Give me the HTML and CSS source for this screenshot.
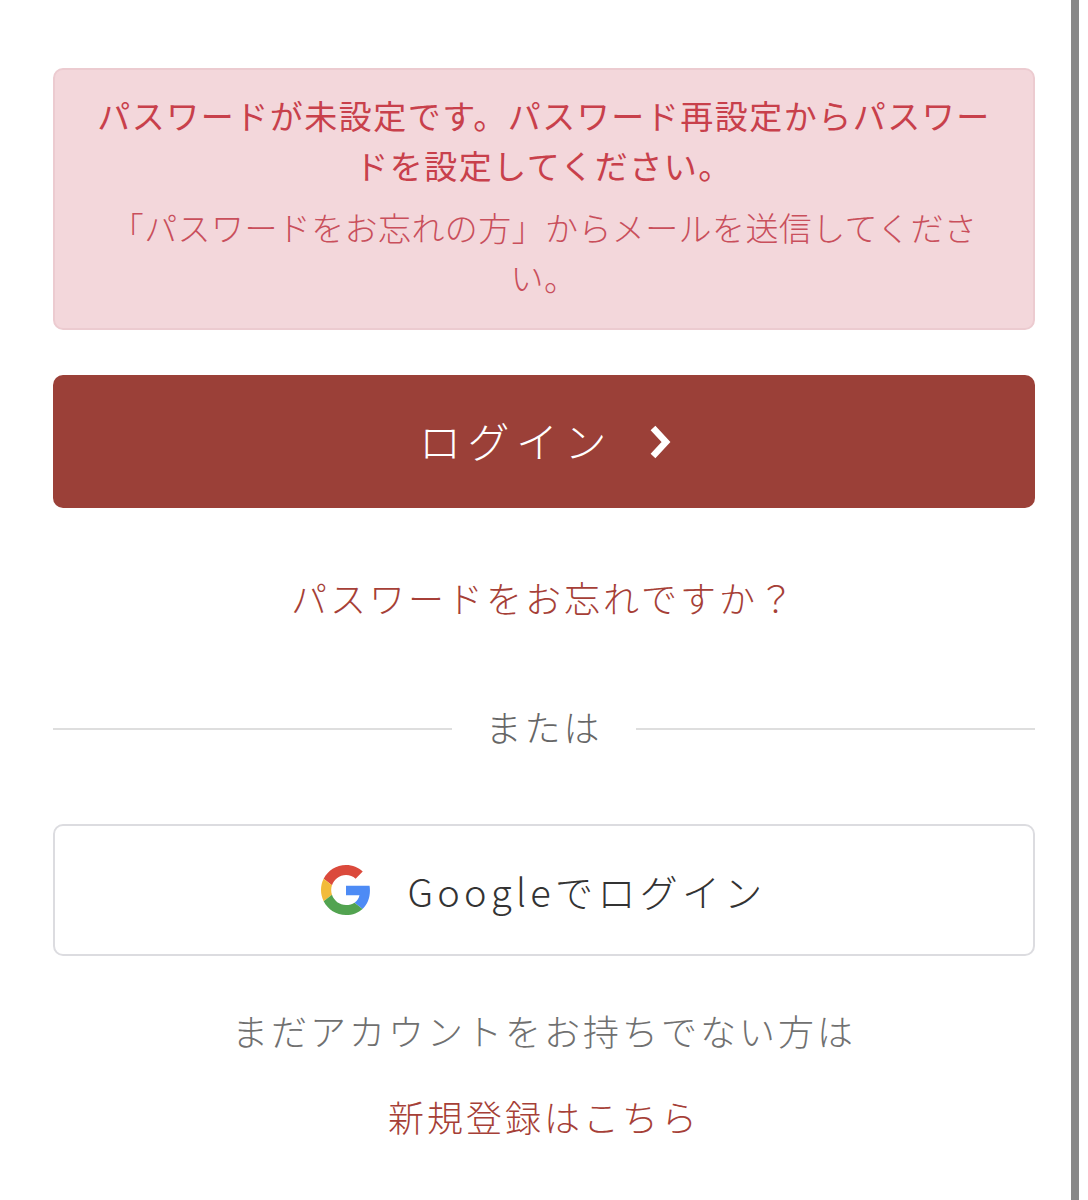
FILE: index.html
```html
<!DOCTYPE html>
<html lang="ja">
<head>
    <meta charset="UTF-8">
    <meta name="viewport" content="width=device-width, initial-scale=1.0">
    <title>ログイン</title>
    <link rel="stylesheet" href="styles.css">
</head>
<body>

<div class="page">
    <main class="content">
        <div class="alert">
            <p class="alert-title">パスワードが未設定です。パスワード再設定からパスワードを設定してください。</p>
            <p class="alert-text">「パスワードをお忘れの方」からメールを送信してください。</p>
        </div>

        <button class="btn-login" type="button">
            <span class="btn-login-text">ログイン</span>
            <svg class="chevron" viewBox="0 0 24 36" width="24" height="36">
                <path d="M4 4 L17 18 L4 32" fill="none" stroke="#fff" stroke-width="6.5"/>
            </svg>
        </button>

        <a class="link forgot" href="#">パスワードをお忘れですか？</a>

        <div class="divider">
            <span class="divider-line"></span>
            <span class="divider-text">または</span>
            <span class="divider-line"></span>
        </div>

        <button class="btn-google" type="button">
            <svg class="google-icon" viewBox="0 0 48 48" width="50" height="50">
                <path fill="#DB4A3C" d="M24 9.5c3.54 0 6.71 1.22 9.21 3.6l6.85-6.85C35.9 2.38 30.47 0 24 0 14.62 0 6.51 5.38 2.56 13.22l7.98 6.19C12.43 13.72 17.74 9.5 24 9.5z"/>
                <path fill="#4D8BF5" d="M46.98 24.55c0-1.57-.15-3.09-.38-4.55H24v9.02h12.94c-.58 2.96-2.26 5.48-4.78 7.18l7.73 6c4.51-4.18 7.09-10.36 7.09-17.65z"/>
                <path fill="#F2BB3A" d="M10.53 28.59c-.48-1.45-.76-2.99-.76-4.59s.27-3.14.76-4.59l-7.98-6.19C.92 16.46 0 20.12 0 24c0 3.88.92 7.54 2.56 10.78l7.97-6.19z"/>
                <path fill="#52A350" d="M24 48c6.48 0 11.93-2.13 15.89-5.81l-7.73-6c-2.15 1.45-4.92 2.3-8.16 2.3-6.26 0-11.57-4.22-13.47-9.91l-7.98 6.19C6.51 42.62 14.62 48 24 48z"/>
            </svg>
            <span>Googleでログイン</span>
        </button>

        <p class="signup-note">まだアカウントをお持ちでない方は</p>
        <a class="link signup" href="#">新規登録はこちら</a>
    </main>
    <div class="scrollbar"></div>
</div>

</body>
</html>
```

FILE: styles.css
```css
body {
    margin: 0;
    background-color: #fff;
    font-family: "Noto Sans CJK JP", "Noto Sans", sans-serif;
    font-weight: 300;
    text-spacing-trim: space-all;
}
.page {
    display: flex;
    height: 1200px;
    overflow: hidden;
}
.content {
    width: 982px;
    margin-left: 53px;
    padding-top: 68px;
    display: flex;
    flex-direction: column;
    align-items: stretch;
    text-align: center;
}
.scrollbar {
    width: 8px;
    margin-left: 36px;
    background-color: #888;
}
.alert {
    box-sizing: border-box;
    height: 262px;
    padding: 20px 30px;
    background-color: #f3d7db;
    border: 2px solid #eccbd0;
    border-radius: 10px;
    color: #c8404b;
}
.alert p {
    margin: 0;
    line-height: 50px;
    font-size: 33px;
}
.alert-title {
    font-weight: 400;
    letter-spacing: 1.5px;
    margin-bottom: 12px !important;
}
.alert-text {
    letter-spacing: 0.4px;
    color: #c94f5b;
}
.btn-login {
    height: 133px;
    margin-top: 45px;
    padding: 0 0 0 4px;
    display: flex;
    align-items: center;
    justify-content: center;
    gap: 36px;
    background-color: #9b4038;
    color: #fff;
    border: none;
    border-radius: 10px;
    font-family: inherit;
    font-weight: 300;
    font-size: 42px;
    letter-spacing: 6.5px;
}
.btn-login-text {
    margin-bottom: 4px;
}
.link {
    color: #a63f37;
    text-decoration: none;
    font-size: 36px;
    letter-spacing: 3px;
}
.forgot {
    margin-top: 62px;
    line-height: 54px;
}
.divider {
    display: flex;
    align-items: center;
    margin-top: 75px;
}
.divider-line {
    flex: 1;
    height: 2px;
    background-color: #dedede;
}
.divider-text {
    width: 184px;
    padding-bottom: 6px;
    font-size: 36px;
    letter-spacing: 3px;
    line-height: 54px;
    color: #666;
}
.btn-google {
    box-sizing: border-box;
    height: 132px;
    margin-top: 65px;
    display: flex;
    align-items: center;
    justify-content: center;
    gap: 36px;
    background-color: #fff;
    color: #333;
    border: 2px solid #dcdce0;
    border-radius: 10px;
    font-family: inherit;
    font-weight: 300;
    font-size: 38px;
    letter-spacing: 4.3px;
}
.signup-note {
    margin: 47px 0 0;
    font-size: 36px;
    letter-spacing: 3px;
    line-height: 54px;
    color: #707070;
}
.signup {
    margin-top: 32px;
    line-height: 54px;
}
```
